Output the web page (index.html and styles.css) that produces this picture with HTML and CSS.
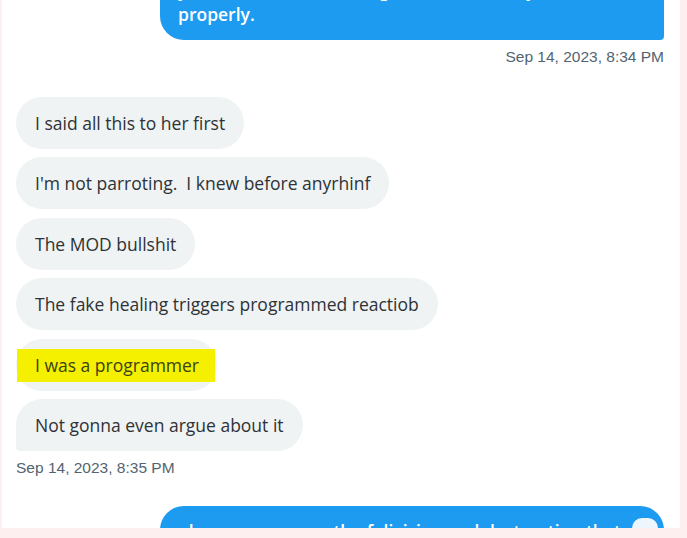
FILE: index.html
```html
<!DOCTYPE html>
<html lang="en">
<head>
    <meta charset="UTF-8">
    <meta name="viewport" content="width=device-width, initial-scale=1.0">
    <title>Messages</title>
    <link rel="stylesheet" href="styles.css">
</head>
<body>
    <div id="panel">
        <div class="thread">
            <!-- cropped outgoing message -->
            <div class="row out first">
                <div class="bubble blue">you are not even reading what i wrote to you<br>properly.</div>
            </div>
            <div class="stamp right">Sep 14, 2023, 8:34 PM</div>

            <div class="group">
                <div class="row"><div class="bubble grey">I said all this to her first</div></div>
                <div class="row"><div class="bubble grey">I'm not parroting.&nbsp; I knew before anyrhinf</div></div>
                <div class="row"><div class="bubble grey">The MOD bullshit</div></div>
                <div class="row"><div class="bubble grey">The fake healing triggers programmed reactiob</div></div>
                <div class="row"><div class="bubble grey"><span class="mark">I was a programmer</span></div></div>
                <div class="row"><div class="bubble grey last">Not gonna even argue about it</div></div>
            </div>
            <div class="stamp">Sep 14, 2023, 8:35 PM</div>

            <div class="row out">
                <div class="bubble blue tail">ok you are on a path of division and destruction thats<span class="react"></span></div>
            </div>
        </div>
    </div>
</body>
</html>
```

FILE: styles.css
```css
 body {
     margin: 0;
     padding: 0;
     background-color: #fdeef0;
     font-family: 'Open Sans', 'Noto Sans', sans-serif;
 }

 #panel {
     margin: 0 7px 0 2px;
     height: 528px;
     background: #fff;
     overflow: hidden;
 }

 .thread {
     padding: 0 16px 0 14px;
     display: flex;
     flex-direction: column;
 }

 .row {
     display: flex;
 }

 .row.out {
     justify-content: flex-end;
 }

 .row.first {
     margin-top: -34px;
 }

 .bubble {
     font-size: 17.5px;
     line-height: 24px;
     border-radius: 26px;
     white-space: nowrap;
 }

 .bubble.blue {
     width: 504px;
     box-sizing: border-box;
     padding: 12px 18px 14px;
     background: #1d9bf0;
     color: #fff;
     font-weight: 600;
     border-radius: 24px 24px 4px 24px;
     overflow: hidden;
 }

 .bubble.blue.tail {
     position: relative;
     margin-top: 29px;
     padding-top: 13px;
     border-radius: 24px;
 }

 .bubble.grey {
     padding: 14px 19px;
     background: #eff3f4;
     color: #2e3236;
     margin-bottom: 8.4px;
 }

 .bubble.grey.last {
     border-radius: 26px 26px 26px 4px;
     margin-bottom: 0;
 }

 .group {
     margin-top: 31px;
 }

 .mark {
     background: #f4f000;
     color: #3b4216;
     padding: 4px 16px 5px 18px;
     margin-left: -18px;
     margin-right: -17px;
 }

 .stamp {
     font-family: 'Liberation Sans', Arial, sans-serif;
     font-size: 15.5px;
     color: #536471;
     margin-top: 8px;
 }

 .stamp.right {
     text-align: right;
 }

 .react {
     position: absolute;
     right: 6px;
     top: 12px;
     width: 26px;
     height: 20px;
     border-radius: 10px;
     background: #eef6fd;
 }
```
